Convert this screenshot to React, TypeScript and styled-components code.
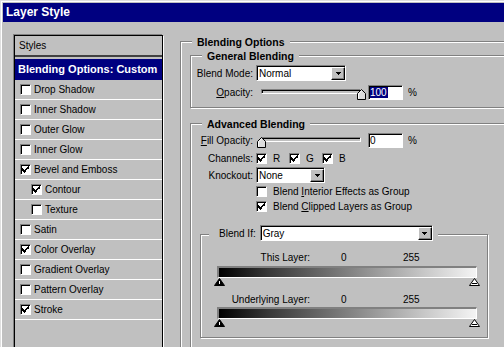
import React from 'react';
import styled, { createGlobalStyle } from 'styled-components';

const GlobalStyle = createGlobalStyle`
  html, body {
    margin: 0;
    padding: 0;
    overflow: hidden;
    background: #c0c0c0;
  }
  body {
    font-family: "Liberation Sans", Arial, sans-serif;
    font-size: 10px;
    color: #000;
  }
`;

const Dialog = styled.div`
  width: 504px;
  height: 347px;
  box-sizing: border-box;
  overflow: hidden;
  background: #c0c0c0;
  border-top: 1px solid #dfdfdf;
  border-left: 1px solid #dfdfdf;
  box-shadow: inset 1px 1px 0 #fff;
  padding: 2px 0 0 2px;
`;

const TitleBar = styled.div`
  height: 19px;
  line-height: 19px;
  background: #000080;
  color: #fff;
  font-size: 12px;
  font-weight: bold;
  padding-left: 3px;
  white-space: nowrap;
`;

const Body = styled.div`
  display: flex;
  align-items: flex-start;
`;

/* left list of effects */
const StylesList = styled.div`
  flex-shrink: 0;
  width: 149px;
  height: 330px;
  margin: 13px 0 0 11px;
  box-sizing: border-box;
  border: 1px solid #000;
  box-shadow: -1px -1px 0 #808080, 1px 1px 0 #fff;
`;

const StylesHeader = styled.div`
  height: 19px;
  line-height: 19px;
  padding-left: 4px;
  border-bottom: 2px solid #404040;
  margin-bottom: 2px;
`;

const SelectedItem = styled.div`
  height: 21px;
  line-height: 21px;
  padding-left: 3px;
  background: #000080;
  color: #fff;
  font-size: 11px;
  font-weight: bold;
  white-space: nowrap;
`;

const StyleRow = styled.div<{ $indent?: boolean }>`
  display: flex;
  align-items: center;
  gap: 3px;
  height: 19px;
  border-bottom: 1px solid #fff;
  padding-left: ${(p) => (p.$indent ? 16 : 5)}px;
  white-space: nowrap;
`;

/* check boxes */
const Box = styled.span`
  flex-shrink: 0;
  display: block;
  width: 11px;
  height: 11px;
  box-sizing: border-box;
  background: #fff;
  border-top: 1px solid #808080;
  border-left: 1px solid #808080;
  border-bottom: 1px solid #fff;
  border-right: 1px solid #fff;
  box-shadow: inset 1px 1px 0 #000;
  position: relative;
`;

const Tick = styled.svg`
  position: absolute;
  left: 1px;
  top: 1px;
`;

const CheckBox: React.FC<{ checked?: boolean }> = ({ checked }) => (
  <Box>
    {checked && (
      <Tick width="7" height="7" viewBox="0 0 7 7" shapeRendering="crispEdges">
        <path d="M0 2h1v1H0zM0 3h2v1H0zM0 4h3v1H0zM1 5h3v1H1zM2 6h1v1H2zM3 4h1v1H3zM4 3h1v1H4zM3 3h1v1H3zM5 2h1v1H5zM4 2h1v1H4zM6 0h1v1H6zM5 1h2v1H5zM6 2h1v1H6z" fill="#000" />
      </Tick>
    )}
  </Box>
);

/* right side */
const Group = styled.div<{ $w: number; $h: number }>`
  position: relative;
  flex-shrink: 0;
  box-sizing: border-box;
  width: ${(p) => p.$w}px;
  height: ${(p) => p.$h}px;
  border: 1px solid #808080;
  box-shadow: inset 1px 1px 0 #fff, 1px 1px 0 #fff;
  display: flex;
  flex-direction: column;
`;

const Legend = styled.span`
  position: absolute;
  top: -6px;
  left: 11px;
  padding: 0 5px;
  background: #c0c0c0;
  font-size: 10.5px;
  font-weight: bold;
  line-height: 12px;
  white-space: nowrap;
`;

const OuterGroup = styled(Group)`
  margin: 19px 0 0 17px;
  padding: 13px 0 0 9px;
`;

const GeneralGroup = styled(Group)`
  padding-top: 9px;
`;

const AdvancedGroup = styled(Group)`
  margin-top: 15px;
  padding-top: 9px;
`;

const FormRow = styled.div<{ $h: number; $mt?: number }>`
  display: flex;
  align-items: center;
  height: ${(p) => p.$h}px;
  margin-top: ${(p) => p.$mt ?? 0}px;
  white-space: nowrap;
`;

const Label = styled.span`
  flex-shrink: 0;
  width: 62px;
  margin-right: 3px;
  text-align: right;
`;

const SelectBox = styled.div<{ $w: number }>`
  flex-shrink: 0;
  display: flex;
  align-items: center;
  width: ${(p) => p.$w}px;
  height: 16px;
  box-sizing: border-box;
  background: #fff;
  border-top: 1px solid #808080;
  border-left: 1px solid #808080;
  border-bottom: 1px solid #fff;
  border-right: 1px solid #fff;
  box-shadow: inset 1px 1px 0 #000;
  padding: 1px 0 0 2px;
`;

const SelectText = styled.span`
  flex: 1;
  line-height: 12px;
`;

const DropButton = styled.span`
  display: flex;
  align-items: center;
  justify-content: center;
  width: 14px;
  height: 13px;
  box-sizing: border-box;
  background: #c0c0c0;
  border-top: 1px solid #fff;
  border-left: 1px solid #fff;
  border-right: 1px solid #000;
  border-bottom: 1px solid #000;
  box-shadow: inset -1px -1px 0 #808080;
`;

const Select: React.FC<{ value: string; width: number }> = ({ value, width }) => (
  <SelectBox $w={width}>
    <SelectText>{value}</SelectText>
    <DropButton>
      <svg width="5" height="3" viewBox="0 0 5 3" shapeRendering="crispEdges">
        <path d="M0 0h5v1H0zM1 1h3v1H1zM2 2h1v1H2z" fill="#000" />
      </svg>
    </DropButton>
  </SelectBox>
);

const SliderBox = styled.div`
  position: relative;
  flex-shrink: 0;
  width: 110px;
  height: 15px;
`;

const SliderTrack = styled.div`
  width: 100px;
  height: 5px;
  margin: 4px 0 0 5px;
  box-sizing: border-box;
  border-top: 1px solid #808080;
  border-left: 1px solid #808080;
  border-bottom: 1px solid #fff;
  border-right: 1px solid #fff;
  box-shadow: inset 1px 1px 0 #000;
`;

const SliderThumb = styled.svg<{ $value: number }>`
  position: absolute;
  top: 4px;
  left: ${(p) => p.$value + 1}px;
`;

const Slider: React.FC<{ value: number }> = ({ value }) => (
  <SliderBox>
    <SliderTrack />
    <SliderThumb $value={value} width="9" height="11" viewBox="0 0 9 11">
      <path d="M4.5 0.5 L8.5 4.5 L8.5 10.5 L0.5 10.5 L0.5 4.5 Z" fill="#dcdcdc" stroke="#000" strokeWidth="1" />
      <path d="M1.5 9.5 V4.9 L4.5 1.9" fill="none" stroke="#fff" strokeWidth="1" />
    </SliderThumb>
  </SliderBox>
);

const NumField = styled.div`
  flex-shrink: 0;
  width: 35px;
  height: 15px;
  margin-left: 2px;
  box-sizing: border-box;
  background: #fff;
  border-top: 1px solid #808080;
  border-left: 1px solid #808080;
  border-bottom: 1px solid #fff;
  border-right: 1px solid #fff;
  box-shadow: inset 1px 1px 0 #000;
  padding: 1px 0 0 1px;
  line-height: 11px;
`;

const Selected = styled.span`
  background: #000080;
  color: #fff;
  padding-right: 1px;
`;

const Percent = styled.span`
  margin-left: 5px;
`;

const ChannelItem = styled.span`
  display: flex;
  align-items: center;
  gap: 6px;
  width: 33px;
`;

const CheckRow = styled(FormRow)`
  padding-left: 65px;
  gap: 6px;
`;

const BlendIfGroup = styled(Group)`
  margin: 20px 0 0 9px;
`;

const BlendIfLegend = styled.div`
  position: absolute;
  top: -10px;
  left: 8px;
  display: flex;
  align-items: center;
  gap: 4px;
  padding: 0 5px 0 10px;
  background: #c0c0c0;
  white-space: nowrap;
`;

const ScaleRow = styled.div<{ $mt: number }>`
  display: flex;
  height: 12px;
  line-height: 12px;
  margin-top: ${(p) => p.$mt}px;
  white-space: nowrap;
`;

const ScaleLabel = styled.span`
  width: 109px;
  text-align: right;
`;

const ScaleMin = styled.span`
  width: 62px;
  margin-left: 31px;
`;

const GradientBar = styled.div<{ $mt: number }>`
  width: 260px;
  height: 12px;
  margin: ${(p) => p.$mt}px 0 0 16px;
  box-sizing: border-box;
  border-top: 2px solid #808080;
  border-left: 2px solid #808080;
  border-bottom: 1px solid #fff;
  border-right: 1px solid #fff;
  background: linear-gradient(to right, #000 0%, #3a3a3a 20%, #808080 50%, #c8c8c8 80%, #f4f4f4 100%);
`;

const ThumbRow = styled.div`
  display: flex;
  justify-content: space-between;
  width: 266px;
  height: 8px;
  margin-left: 13px;
`;

const BlackPoint = () => (
  <svg width="11" height="8" viewBox="0 0 11 8">
    <path d="M5.5 0.5 L10.5 7.5 L0.5 7.5 Z" fill="#000" stroke="#000" strokeWidth="1" />
    <path d="M5.5 3 V6" stroke="#fff" strokeWidth="1" />
  </svg>
);

const WhitePoint = () => (
  <svg width="11" height="8" viewBox="0 0 11 8">
    <path d="M5.5 0.5 L10.5 7.5 L0.5 7.5 Z" fill="#fff" stroke="#000" strokeWidth="1" />
    <path d="M3 5.5 H8" stroke="#000" strokeWidth="1" />
  </svg>
);

const listItems: { name: string; checked?: boolean; indent?: boolean }[] = [
  { name: 'Drop Shadow' },
  { name: 'Inner Shadow' },
  { name: 'Outer Glow' },
  { name: 'Inner Glow' },
  { name: 'Bevel and Emboss', checked: true },
  { name: 'Contour', checked: true, indent: true },
  { name: 'Texture', indent: true },
  { name: 'Satin' },
  { name: 'Color Overlay', checked: true },
  { name: 'Gradient Overlay' },
  { name: 'Pattern Overlay' },
  { name: 'Stroke', checked: true },
];

const App: React.FC = () => {
  return (
    <Dialog>
      <GlobalStyle />
      <TitleBar>Layer Style</TitleBar>
      <Body>
        <StylesList>
          <StylesHeader>Styles</StylesHeader>
          <SelectedItem>Blending Options: Custom</SelectedItem>
          {listItems.map((it) => (
            <StyleRow key={it.name} $indent={it.indent}>
              <CheckBox checked={it.checked} />
              <span>{it.name}</span>
            </StyleRow>
          ))}
        </StylesList>

        <OuterGroup $w={360} $h={330}>
          <Legend>Blending Options</Legend>
          <GeneralGroup $w={340} $h={53}>
            <Legend>General Blending</Legend>
            <FormRow $h={16}>
              <Label>Blend Mode:</Label>
              <Select value="Normal" width={90} />
            </FormRow>
            <FormRow $h={15} $mt={4}>
              <Label>
                <u>O</u>pacity:
              </Label>
              <Slider value={100} />
              <NumField>
                <Selected>100</Selected>
              </NumField>
              <Percent>%</Percent>
            </FormRow>
          </GeneralGroup>

          <AdvancedGroup $w={340} $h={260}>
            <Legend>Advanced Blending</Legend>
            <FormRow $h={15}>
              <Label>
                <u>F</u>ill Opacity:
              </Label>
              <Slider value={0} />
              <NumField>0</NumField>
              <Percent>%</Percent>
            </FormRow>
            <FormRow $h={15} $mt={3}>
              <Label>Channels:</Label>
              <ChannelItem>
                <CheckBox checked />R
              </ChannelItem>
              <ChannelItem>
                <CheckBox checked />G
              </ChannelItem>
              <ChannelItem>
                <CheckBox checked />B
              </ChannelItem>
            </FormRow>
            <FormRow $h={16} $mt={1}>
              <Label>Knockout:</Label>
              <Select value="None" width={69} />
            </FormRow>
            <CheckRow $h={15} $mt={1}>
              <CheckBox />
              <span>
                Blend <u>I</u>nterior Effects as Group
              </span>
            </CheckRow>
            <CheckRow $h={15}>
              <CheckBox checked />
              <span>
                Blend <u>C</u>lipped Layers as Group
              </span>
            </CheckRow>

            <BlendIfGroup $w={288} $h={104}>
              <BlendIfLegend>
                <span>Blend If:</span>
                <Select value="Gray" width={173} />
              </BlendIfLegend>
              <ScaleRow $mt={17}>
                <ScaleLabel>This Layer:</ScaleLabel>
                <ScaleMin>0</ScaleMin>
                <span>255</span>
              </ScaleRow>
              <GradientBar $mt={2} />
              <ThumbRow>
                <BlackPoint />
                <WhitePoint />
              </ThumbRow>
              <ScaleRow $mt={8}>
                <ScaleLabel>Underlying Layer:</ScaleLabel>
                <ScaleMin>0</ScaleMin>
                <span>255</span>
              </ScaleRow>
              <GradientBar $mt={1} />
              <ThumbRow>
                <BlackPoint />
                <WhitePoint />
              </ThumbRow>
            </BlendIfGroup>
          </AdvancedGroup>
        </OuterGroup>
      </Body>
    </Dialog>
  );
};

export default App;
